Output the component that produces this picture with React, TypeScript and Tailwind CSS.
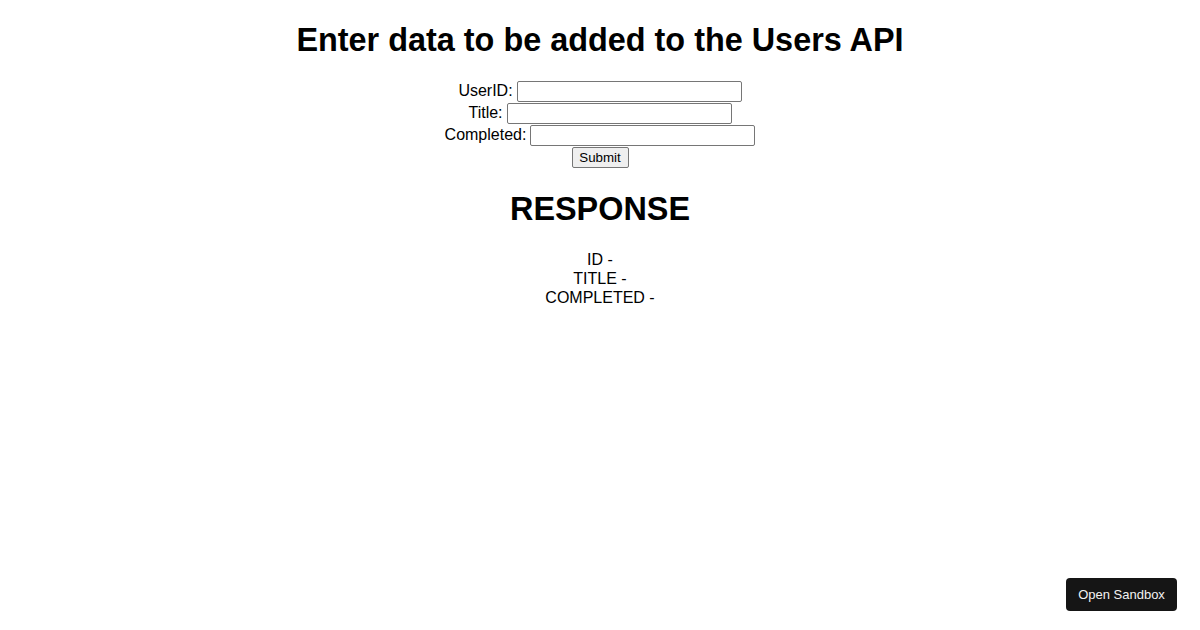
import React from "react";

export default function App() {
  const font = { fontFamily: '"Liberation Sans", Arial, sans-serif' };
  return (
    <div className="min-h-[630px] w-full bg-white text-black text-center text-[16px] relative" style={font}>
      <h1 className="text-[32.4px] font-bold leading-[37px] pt-[22px] pb-[21px]">Enter data to be added to the Users API</h1>
      <form className="flex flex-col items-center" onSubmit={(e) => e.preventDefault()}>
        <div className="flex items-center justify-center h-[22px]">
          <label>UserID:</label>
          <input className="ml-[4px] w-[225px] h-[21px] border border-[#767676] rounded-[2px] px-[2px] text-[13px] bg-white" />
        </div>
        <div className="flex items-center justify-center h-[22px]">
          <label>Title:</label>
          <input className="ml-[4px] w-[225px] h-[21px] border border-[#767676] rounded-[2px] px-[2px] text-[13px] bg-white" />
        </div>
        <div className="flex items-center justify-center h-[22px]">
          <label>Completed:</label>
          <input className="ml-[4px] w-[225px] h-[21px] border border-[#767676] rounded-[2px] px-[2px] text-[13px] bg-white" />
        </div>
        <div className="flex items-center justify-center h-[22px]">
          <button type="submit" className="w-[57px] h-[21px] border border-[#767676] rounded-[2px] bg-[#efefef] text-[13.33px] leading-[19px]">Submit</button>
        </div>
      </form>
      <h1 className="text-[32.4px] font-bold leading-[37px] pt-[23px] pb-[22px]">RESPONSE</h1>
      <div className="leading-[19px]">
        <div>ID - </div>
        <div>TITLE - </div>
        <div>COMPLETED - </div>
      </div>
      <button className="fixed right-[23px] bottom-[19px] w-[111px] h-[33px] rounded-[4px] bg-[#151515] text-[#f2f2f2] text-[13px]">Open Sandbox</button>
    </div>
  );
}
